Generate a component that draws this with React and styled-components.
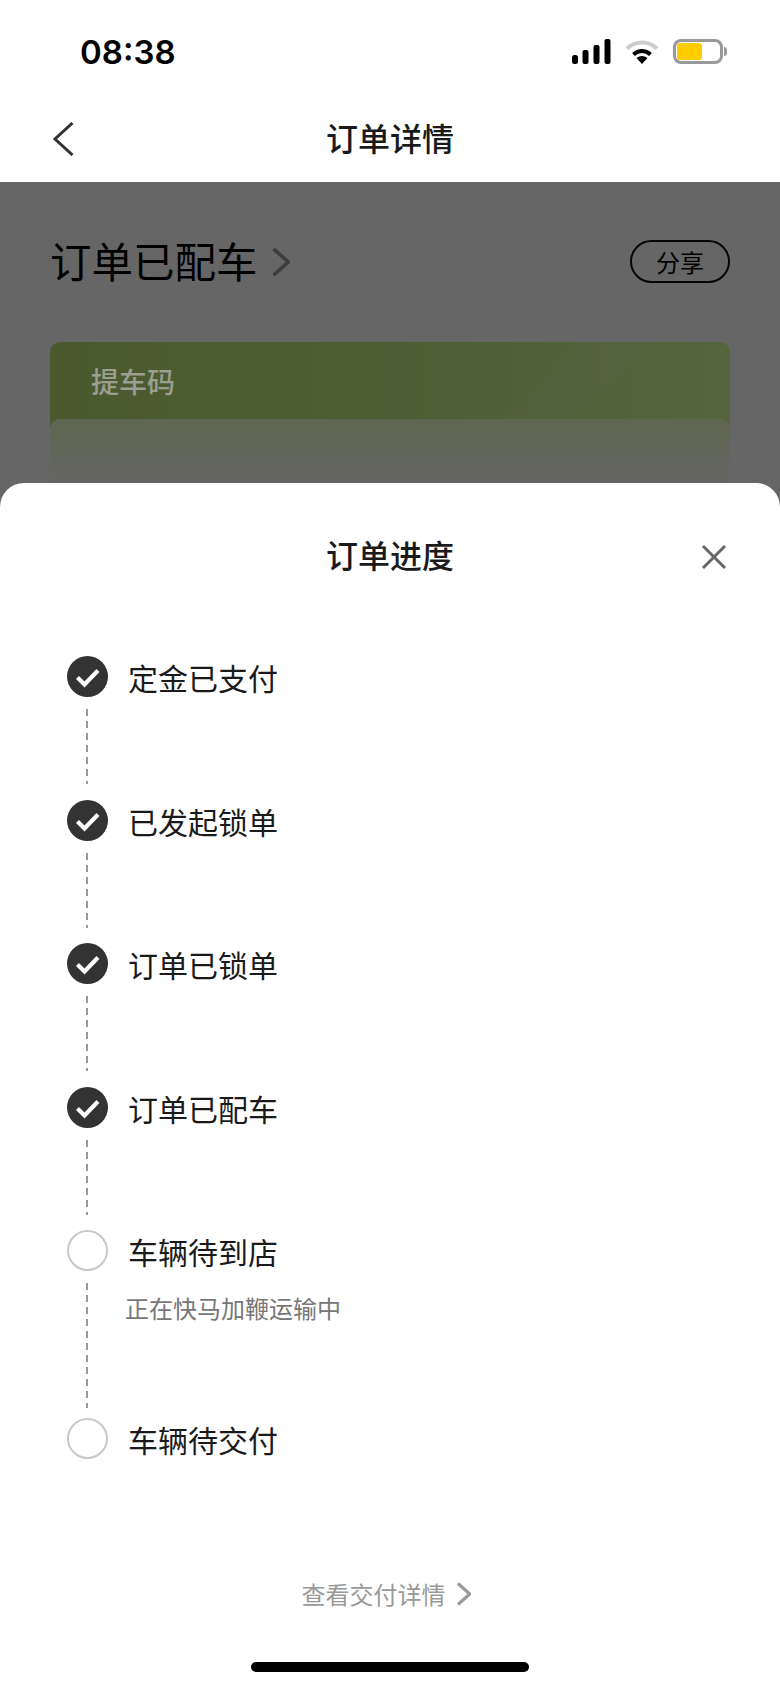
import React from 'react'
import styled, { createGlobalStyle } from 'styled-components'

const GlobalStyle = createGlobalStyle`
    html, body {
        margin: 0;
        padding: 0;
        background: #fff;
    }

    body {
        font-family: "Noto Sans CJK SC", "Noto Sans", sans-serif;
        color: #1a1a1a;
    }
`

const steps = [
    { label: '定金已支付', done: true },
    { label: '已发起锁单', done: true },
    { label: '订单已锁单', done: true },
    { label: '订单已配车', done: true },
    { label: '车辆待到店', note: '正在快马加鞭运输中' },
    { label: '车辆待交付', last: true },
]

function SignalIcon() {
    return (
        <svg width="39" height="25" viewBox="0 0 39 25">
            <rect x="0" y="16" width="6" height="9" rx="2.5" fill="#000" />
            <rect x="10.5" y="11" width="6" height="14" rx="2" fill="#000" />
            <rect x="21.5" y="6" width="6" height="19" rx="2" fill="#000" />
            <rect x="32.5" y="0" width="6" height="25" rx="2" fill="#000" />
        </svg>
    )
}

function WifiIcon() {
    return (
        <svg width="34" height="25" viewBox="0 0 34 25">
            <path d="M2 9.5C10.5 1.5 23.5 1.5 32 9.5" fill="none" stroke="#ccc" strokeWidth="4" />
            <path d="M8.5 15.5C13.5 10.8 20.5 10.8 25.5 15.5" fill="none" stroke="#000" strokeWidth="4" />
            <path d="M11.5 19L17 25L22.5 19C19 16.3 15 16.3 11.5 19Z" fill="#000" />
        </svg>
    )
}

function Chevron({ size = 18, color = '#333', width = 3 }) {
    return (
        <svg width={size * 0.66} height={size} viewBox="0 0 12 18">
            <path d="M1.5 1L10.5 9L1.5 17" fill="none" stroke={color} strokeWidth={width} />
        </svg>
    )
}

function CheckCircle() {
    return (
        <svg width="41" height="41" viewBox="0 0 41 41">
            <circle cx="20.5" cy="20.5" r="20.5" fill="#333" />
            <path d="M10.5 21.5L17.5 28.5L31 14.5" fill="none" stroke="#fff" strokeWidth="4.2" />
        </svg>
    )
}

function App() {
    return (
        <Page>
            <GlobalStyle />

            <StatusBar>
                <Time>08:38</Time>
                <StatusIcons>
                    <SignalIcon />
                    <WifiIcon />
                    <Battery>
                        <BatteryLevel />
                    </Battery>
                </StatusIcons>
            </StatusBar>

            <NavBar>
                <BackButton>
                    <svg width="22" height="34" viewBox="0 0 22 34">
                        <path d="M20.5 1L3 17L20.5 33" fill="none" stroke="#333" strokeWidth="3" />
                    </svg>
                </BackButton>
                <NavTitle>订单详情</NavTitle>
            </NavBar>

            <Content>
                <OrderHead>
                    <OrderStatus>
                        订单已配车
                        <StatusArrow>
                            <Chevron size={30} color="#999" width={2.2} />
                        </StatusArrow>
                    </OrderStatus>
                    <ShareButton>分享</ShareButton>
                </OrderHead>

                <CodeCard>
                    <CodeTitle>提车码</CodeTitle>
                    <CodeInner />
                </CodeCard>
            </Content>

            <Mask />

            <Sheet>
                <SheetHeader>
                    <SheetTitle>订单进度</SheetTitle>
                    <CloseButton>
                        <svg width="26" height="26" viewBox="0 0 26 26">
                            <path d="M2 2L24 24M24 2L2 24" fill="none" stroke="#666" strokeWidth="3" />
                        </svg>
                    </CloseButton>
                </SheetHeader>

                <StepList>
                    {steps.map(step => (
                        <Step key={step.label}>
                            <Marker>
                                {step.done ? <CheckCircle /> : <EmptyCircle />}
                                {!step.last && <Connector tall={!!step.note} />}
                            </Marker>
                            <StepText>
                                <StepLabel>{step.label}</StepLabel>
                                {step.note && <StepNote>{step.note}</StepNote>}
                            </StepText>
                        </Step>
                    ))}
                </StepList>

                <DetailLink>
                    查看交付详情
                    <Chevron size={24} color="#999" width={2.4} />
                </DetailLink>

                <HomeIndicator />
            </Sheet>
        </Page>
    )
}

export default App


const Page = styled.div`
    position: relative;
    width: 780px;
    height: 1688px;
    overflow: hidden;
    background: #fff;
`

const StatusBar = styled.div`
    height: 96px;
    box-sizing: border-box;
    padding: 32px 57px 0 80px;
    display: flex;
    align-items: flex-start;
    justify-content: space-between;
`

const Time = styled.div`
    font-family: Inter, "Liberation Sans", sans-serif;
    font-size: 33px;
    font-weight: 600;
    line-height: 40px;
    color: #000;
`

const StatusIcons = styled.div`
    display: flex;
    align-items: center;
    gap: 14px;
    margin-top: 7px;
`

const Battery = styled.div`
    position: relative;
    width: 50px;
    height: 25px;
    box-sizing: border-box;
    border: 3px solid #999;
    border-radius: 8px;
    padding: 1px;

    &::after {
        content: "";
        position: absolute;
        top: 5px;
        right: -7px;
        width: 3px;
        height: 9px;
        border-radius: 0 3px 3px 0;
        background: #999;
    }
`

const BatteryLevel = styled.div`
    width: 25px;
    height: 100%;
    border-radius: 3px;
    background: #ffcc00;
`

const NavBar = styled.div`
    position: relative;
    height: 86px;
    box-sizing: border-box;
    padding-bottom: 4px;
    display: flex;
    align-items: center;
    justify-content: center;
`

const BackButton = styled.div`
    position: absolute;
    left: 52px;
    top: 26px;
    display: flex;
`

const NavTitle = styled.div`
    font-size: 32px;
    font-weight: 500;
    line-height: 46px;
    color: #1a1a1a;
`

const Content = styled.div`
    padding: 54px 50px 0;
`

const OrderHead = styled.div`
    display: flex;
    align-items: center;
    justify-content: space-between;
    height: 46px;
    margin-top: 2px;
`

const OrderStatus = styled.div`
    display: flex;
    align-items: center;
    gap: 13px;
    margin-top: -3px;
    font-size: 41.5px;
    line-height: 46px;
    color: #000;
`

const StatusArrow = styled.div`
    display: flex;
    margin-top: 5px;
`

const ShareButton = styled.div`
    width: 100px;
    height: 43px;
    box-sizing: border-box;
    border: 2px solid #111;
    border-radius: 22px;
    display: flex;
    align-items: center;
    justify-content: center;
    font-size: 24px;
    color: #000;
`

const CodeCard = styled.div`
    margin-top: 58px;
    height: 240px;
    border-radius: 10px;
    padding-top: 77px;
    box-sizing: border-box;
    position: relative;
    overflow: hidden;
    background:
        linear-gradient(135deg, transparent 57%, rgba(255, 255, 255, 0.09) 58%, rgba(255, 255, 255, 0.09) 65%, transparent 66%),
        linear-gradient(90deg, #b9e173, #c3ee85 60%, #d4ff9b);
`

const CodeTitle = styled.div`
    position: absolute;
    z-index: 1;
    left: 41px;
    top: 19px;
    font-size: 28px;
    font-weight: 500;
    line-height: 40px;
    color: #9b9e90;
`

const CodeInner = styled.div`
    height: 100%;
    border-radius: 10px 10px 0 0;
    background: linear-gradient(180deg, #edffc8, #fff 45%);
`

const Mask = styled.div`
    position: absolute;
    left: 0;
    right: 0;
    top: 182px;
    bottom: 0;
    background: rgba(0, 0, 0, 0.6);
`

const Sheet = styled.div`
    position: absolute;
    left: 0;
    right: 0;
    bottom: 0;
    height: 1205px;
    border-radius: 24px 24px 0 0;
    background: #fff;
    display: flex;
    flex-direction: column;
`

const SheetHeader = styled.div`
    position: relative;
    height: 173px;
    box-sizing: border-box;
    padding-top: 48px;
    display: flex;
    justify-content: center;
`

const SheetTitle = styled.div`
    font-size: 32px;
    font-weight: 500;
    line-height: 46px;
    color: #1a1a1a;
`

const CloseButton = styled.div`
    position: absolute;
    right: 53px;
    top: 61px;
    display: flex;
`

const StepList = styled.div`
    padding-left: 67px;
    display: flex;
    flex-direction: column;
`

const Step = styled.div`
    display: flex;
    gap: 20px;
`

const Marker = styled.div`
    width: 41px;
    display: flex;
    flex-direction: column;
    align-items: center;
`

const EmptyCircle = styled.div`
    width: 41px;
    height: 41px;
    box-sizing: border-box;
    border: 2px solid #c8c8c8;
    border-radius: 50%;
`

const Connector = styled.div`
    width: 2px;
    height: ${props => props.tall ? '125px' : '75px'};
    margin: 12px 2px ${props => props.tall ? '10px' : '15.5px'} 0;
    background: repeating-linear-gradient(180deg, #999 0 7px, transparent 7px 12px);
`

const StepText = styled.div`
    display: flex;
    flex-direction: column;
`

const StepLabel = styled.div`
    font-size: 30px;
    line-height: 43px;
    color: #1a1a1a;
`

const StepNote = styled.div`
    margin: 17px 0 0 -3px;
    font-size: 24px;
    line-height: 36px;
    color: #777;
`

const DetailLink = styled.div`
    margin-top: 115px;
    padding-right: 7px;
    display: flex;
    align-items: center;
    justify-content: center;
    gap: 10px;
    font-size: 24px;
    line-height: 36px;
    color: #999;
`

const HomeIndicator = styled.div`
    width: 278px;
    height: 10px;
    margin: auto auto 16px;
    border-radius: 5px;
    background: #000;
`
